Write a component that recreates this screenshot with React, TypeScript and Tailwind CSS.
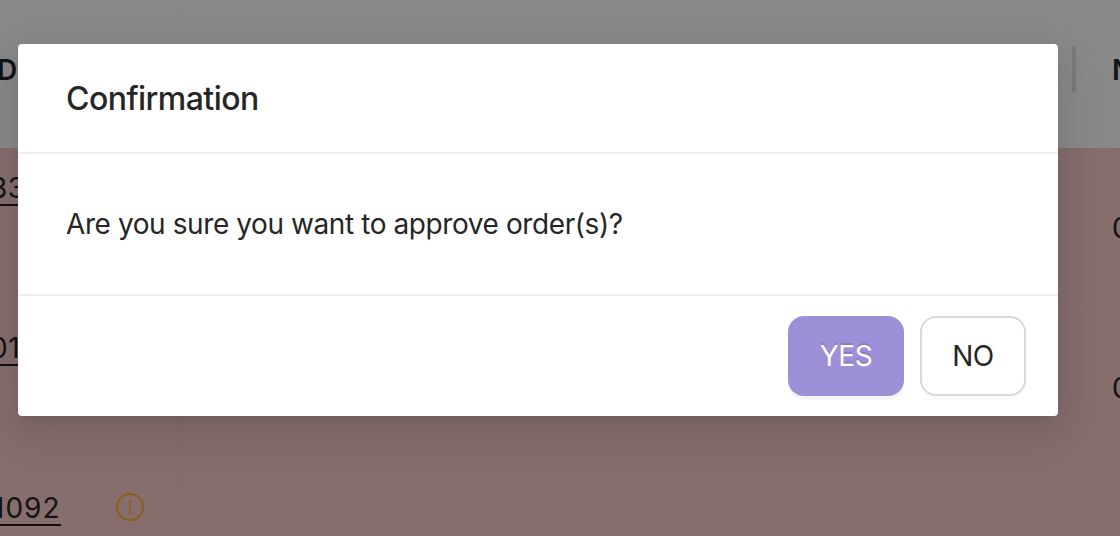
import React from 'react';

const rows = [
    { id: '33', value: '0', info: false },
    { id: '01', value: '0', info: false },
    { id: '1092', value: '', info: true },
];

const InfoIcon: React.FC = () => (
    <svg className="w-7 h-7 shrink-0" viewBox="0 0 28 28" fill="none">
        <circle cx="14" cy="14" r="13" stroke="#ffab32" strokeWidth="2" />
        <circle cx="14" cy="8.5" r="1.5" fill="#ffab32" />
        <path d="M14 12v9" stroke="#ffab32" strokeWidth="1.8" />
    </svg>
);

const OrdersTable: React.FC = () => (
    <div className="w-full h-full flex flex-col overflow-hidden">
        <div className="h-[148px] shrink-0 flex bg-[#fafafa] font-semibold">
            <div className="w-[180px] h-full pt-[52px] border-r-2 border-[#f6f6f6]">
                <div className="-ml-[3px]">D</div>
            </div>
            <div className="flex-1 flex justify-end">
                <div className="w-1 h-[46px] mt-[46px] bg-[#dfdee6]" />
                <div className="w-11 pt-[52px] pl-9 overflow-hidden">N</div>
            </div>
        </div>
        {rows.map((row) => (
            <div key={row.id} className="h-[160px] shrink-0 flex bg-[#f4c8c6] border-b border-[#f1c7c5]">
                <div className="w-[180px] h-full pt-[22px] border-r-2 border-[#f0c5c3]">
                    <div className="flex items-center h-9">
                        <div className="w-[60px] flex">
                            <a className={`border-b-2 border-black/85 h-[35px] leading-[35px] ${row.info ? '-ml-[7px] tracking-[1px]' : '-ml-[10px] tracking-[0.5px]'}`}>
                                {row.id}
                            </a>
                        </div>
                        {row.info && <div className="ml-14 -mt-[2px]"><InfoIcon /></div>}
                    </div>
                </div>
                <div className="flex-1 flex items-center justify-end">
                    <div className="w-2 overflow-hidden">{row.value}</div>
                </div>
            </div>
        ))}
    </div>
);

const ConfirmationModal: React.FC = () => (
    <div className="absolute inset-0 bg-black/45 pt-11 pl-[18px]">
        <div className="w-[1040px] h-[372px] flex flex-col bg-white rounded-[4px] text-[#262626] shadow-[0_6px_12px_-8px_rgba(0,0,0,0.12),0_12px_32px_0_rgba(0,0,0,0.08),0_18px_56px_16px_rgba(0,0,0,0.05)]">
            <div className="h-[110px] px-12 pt-[2px] flex items-center border-b-2 border-[#f0f0f0] text-[32px] font-medium">
                <h2 className="tracking-[-0.55px]">Confirmation</h2>
            </div>
            <div className="h-[142px] px-12 flex items-center border-b-2 border-[#f0f0f0]">
                <p className="tracking-[-0.41px]">Are you sure you want to approve order(s)?</p>
            </div>
            <div className="flex-1 px-8 flex items-center justify-end gap-4 tracking-[-0.4px]">
                <button className="w-[116px] h-20 rounded-2xl bg-[#9d90d8] text-white [text-shadow:0_-2px_0_rgba(0,0,0,0.12)] shadow-[0_4px_0_rgba(0,0,0,0.045)]">
                    YES
                </button>
                <button className="w-[106px] h-20 rounded-2xl border-2 border-[#d9d9d9] bg-white shadow-[0_4px_0_rgba(0,0,0,0.015)]">
                    NO
                </button>
            </div>
        </div>
    </div>
);

const App: React.FC = () => {
    return (
        <div className="relative w-[1120px] h-[536px] overflow-hidden font-['Inter',sans-serif] text-[28px] leading-9 text-[#262626]">
            <OrdersTable />
            <ConfirmationModal />
        </div>
    )
}

export default App;
